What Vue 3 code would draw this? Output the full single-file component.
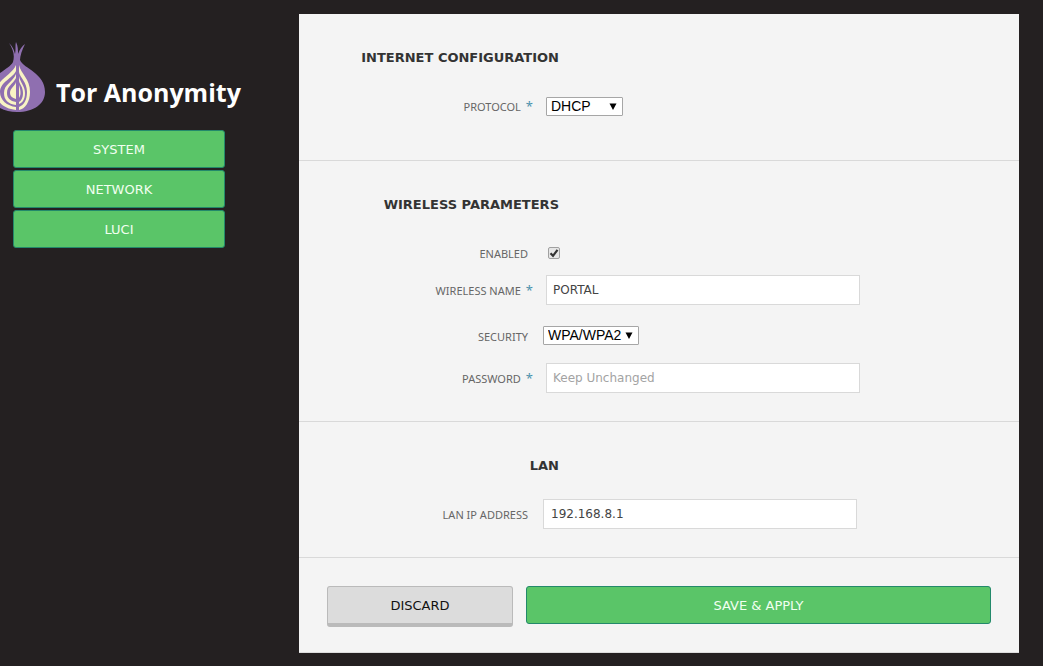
<script setup>
import { ref } from 'vue'

const links = ['SYSTEM', 'NETWORK', 'LUCI']
const protocol = ref('DHCP')
const enabled = ref(true)
const ssid = ref('PORTAL')
const security = ref('WPA/WPA2')
const password = ref('')
const lanIp = ref('192.168.8.1')
</script>

<template>
  <div class="page">
    <aside class="sidebar">
      <div class="brand">
        <svg class="onion" width="46" height="72" viewBox="0 0 46 72" aria-hidden="true">
          <path fill="#8f6fb0" d="M13 20 C15 13 13 7 9 1 C13 5 14 8 15 12 C16 7 15 3 16 0 C18 4 18 8 18 12 C20 7 22 4 25 2 C22 8 20 14 20 18 C24 27 45 31 45 50 C45 62 34 70 17 70 C2 70 -11 62 -11 49 C-11 33 9 28 13 20 Z" />
          <g fill="#f9f3c4">
            <path d="M16 23 V29 C13 36 0 40 0 50 C0 58 7 64 16 65 V68 C4 67 -4 60 -4 50 C-4 38 12 33 16 23 Z" />
            <path d="M16 32 V36 C13 42 7 44 7 51 C7 56 10 59 16 60 V63 C8 62 4 58 4 51 C4 42 13 40 16 32 Z" />
            <path d="M16 40 V57 C12 56 10 54 10 51 C10 46 15 44 16 40 Z" />
            <path d="M19 23 C21 32 30 37 30 50 C30 60 25 67 19 68 V65 C24 63 27 58 27 50 C27 40 20 36 19 30 Z" />
            <path d="M19 34 C20 40 25 44 25 51 C25 58 22 61 19 62 V60 C21 59 23 56 23 51 C23 45 20 43 19 39 Z" />
            <path d="M19 43 C21 49 21 53 19 56 Z" />
          </g>
        </svg>
        <h1>Tor Anonymity</h1>
      </div>
      <nav>
        <a v-for="link in links" :key="link" class="btn btn-green" href="#">{{ link }}</a>
      </nav>
    </aside>

    <form class="panel" @submit.prevent>
      <section>
        <h2>INTERNET CONFIGURATION</h2>
        <div class="row row-last-select">
          <label class="required" for="protocol">PROTOCOL<span>*</span></label>
          <div class="select protocol">
            <select id="protocol" v-model="protocol">
              <option>DHCP</option>
            </select>
            <svg width="8" height="7" viewBox="0 0 8 7" aria-hidden="true"><path d="M0.5 0.5h7L4 7z" /></svg>
          </div>
        </div>
      </section>

      <section>
        <h2>WIRELESS PARAMETERS</h2>
        <div class="row row-check">
          <label for="enabled">ENABLED</label>
          <div class="check">
            <input id="enabled" v-model="enabled" type="checkbox" />
            <svg v-if="enabled" width="10" height="10" viewBox="0 0 10 10" aria-hidden="true">
              <path d="M1.5 5.2 L4 7.8 L8.5 1.8" />
            </svg>
          </div>
        </div>
        <div class="row">
          <label class="required" for="ssid">WIRELESS NAME<span>*</span></label>
          <input id="ssid" v-model="ssid" class="text" type="text" />
        </div>
        <div class="row row-select">
          <label for="security">SECURITY</label>
          <div class="select security">
            <select id="security" v-model="security">
              <option>WPA/WPA2</option>
            </select>
            <svg width="8" height="7" viewBox="0 0 8 7" aria-hidden="true"><path d="M0.5 0.5h7L4 7z" /></svg>
          </div>
        </div>
        <div class="row">
          <label class="required" for="password">PASSWORD<span>*</span></label>
          <input id="password" v-model="password" class="text" type="password" placeholder="Keep Unchanged" />
        </div>
      </section>

      <section>
        <h2>LAN</h2>
        <div class="row">
          <label for="lan-ip">LAN IP ADDRESS</label>
          <input id="lan-ip" v-model="lanIp" class="text" type="text" />
        </div>
      </section>

      <div class="actions">
        <button class="btn btn-grey" type="reset">DISCARD</button>
        <button class="btn btn-green" type="submit">SAVE &amp; APPLY</button>
      </div>
    </form>
  </div>
</template>

<style>
body {
  background: #242021;
}
</style>

<style scoped>
* {
  box-sizing: border-box;
}

.page {
  display: flex;
  align-items: flex-start;
  padding: 14px 24px 13px 0;
  font-family: "DejaVu Sans", Verdana, sans-serif;
}

.sidebar {
  flex: 0 0 299px;
  padding-top: 28px;
}

.brand {
  display: flex;
  align-items: flex-end;
  gap: 10px;
  height: 72px;
}

.brand h1 {
  margin: 0;
  color: #fff;
  font: bold 25px/44px "Open Sans", "Segoe UI", sans-serif;
  white-space: nowrap;
}

nav {
  display: flex;
  flex-direction: column;
  gap: 2px;
  margin: 16px 74px 0 13px;
}

.btn {
  display: block;
  height: 38px;
  padding: 2px 0 0;
  border: 1px solid;
  border-radius: 3px;
  font-family: inherit;
  font-size: 13px;
  line-height: 34px;
  text-align: center;
  text-decoration: none;
}

.btn-green {
  border-color: #23896b;
  background: #5ac568;
  color: #f1fff0;
}

.btn-grey {
  height: 41px;
  border-color: #bababa;
  border-bottom-width: 4px;
  background: #dcdcdc;
  color: #111;
}

.panel {
  flex: 1;
  min-width: 0;
  border-bottom: 1px solid #ddd;
  background: #f4f4f4;
}

section {
  padding: 35px 28px 28px 0;
  border-bottom: 1px solid #d9d9d9;
}

h2 {
  width: 260px;
  margin: 0 0 24px;
  color: #333;
  font-size: 13px;
  line-height: 18px;
  text-align: right;
  white-space: nowrap;
}

.row {
  display: flex;
  align-items: center;
  min-height: 30px;
}

.row-check {
  margin-bottom: 7px;
}

.row-select {
  margin: 15px 0 13px;
}

.row-last-select {
  margin-bottom: 11px;
}

label {
  width: 229px;
  margin-right: 15px;
  padding-top: 2px;
  color: #666;
  font: 11px/16px "Noto Sans", Tahoma, sans-serif;
  text-align: right;
  white-space: nowrap;
}

label.required {
  width: 234px;
  margin-right: 13px;
}

.row-select label {
  padding-top: 4px;
}

label span {
  margin-left: 5px;
  color: #4c92ad;
  font-size: 13px;
  line-height: 1;
}

.text {
  width: 314px;
  height: 30px;
  padding: 0 7px;
  border: 1px solid #d9d9d9;
  background: #fff;
  color: #444;
  font: 12px "DejaVu Sans", Verdana, sans-serif;
}

.required + .text {
  padding: 0 6px;
}

.text::placeholder {
  color: #a3a3a3;
}

.select {
  display: grid;
  align-items: center;
  height: 19px;
}

.protocol {
  width: 77px;
}

.security {
  width: 96px;
}

.select select,
.select svg {
  grid-area: 1 / 1;
}

.select select {
  width: 100%;
  height: 19px;
  padding: 0 4px;
  border: 1px solid #a6a6a6;
  border-radius: 1px;
  appearance: none;
  background: #fff;
  color: #000;
  font: 14px/17px "Liberation Sans", Arial, sans-serif;
}

.select svg {
  justify-self: end;
  margin-right: 6px;
  pointer-events: none;
}

.check {
  display: grid;
  place-items: center;
  width: 12px;
  height: 12px;
  margin-left: 5px;
}

.check input,
.check svg {
  grid-area: 1 / 1;
}

.check input {
  width: 12px;
  height: 12px;
  margin: 0;
  border: 1px solid #a0a0a0;
  border-radius: 2px;
  appearance: none;
  background: #e6e6e6;
}

.check svg {
  fill: none;
  stroke: #333;
  stroke-width: 2.2;
  pointer-events: none;
}

.actions {
  display: grid;
  grid-template-columns: 2fr 5fr;
  gap: 13px;
  padding: 28px 28px 25px;
}
</style>
